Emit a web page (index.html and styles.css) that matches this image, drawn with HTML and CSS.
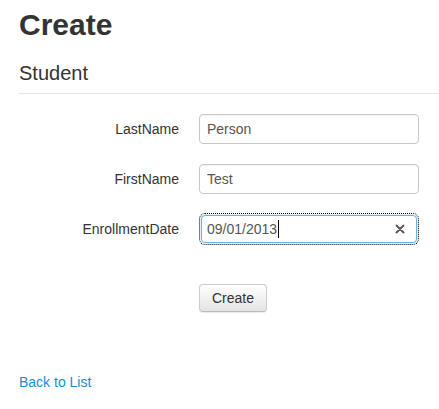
FILE: index.html
```html
<!DOCTYPE html>
<html>
<head>
<meta charset="utf-8">
<link rel="stylesheet" href="styles.css">
</head>
<body>
<div class="page">
  <h2 class="title">Create</h2>
  <h4 class="subtitle">Student</h4>
  <hr class="rule">
  <form class="form">
    <label class="label">LastName</label>
    <div class="field">Person</div>
    <label class="label">FirstName</label>
    <div class="field">Test</div>
    <label class="label">EnrollmentDate</label>
    <div class="field focused"><span class="value">09/01/2013</span><span class="caret"></span><svg class="clear" width="10" height="10" viewBox="0 0 10 10"><path d="M1.5 1.5 L8.5 8.5 M8.5 1.5 L1.5 8.5" stroke="#555" stroke-width="1.8" stroke-linecap="round"/></svg></div>
    <div class="actions"><button type="button" class="btn">Create</button></div>
  </form>
  <a class="back" href="#">Back to List</a>
</div>
</body>
</html>
```

FILE: styles.css
```css
html, body {
  margin: 0;
  padding: 0;
  background: #fff;
}
body {
  font-family: "Liberation Sans", Arial, sans-serif;
  font-size: 14px;
  line-height: 20px;
  color: #333;
}
.page {
  padding: 8px 0 0 19px;
  display: flex;
  flex-direction: column;
  align-items: flex-start;
}
.title {
  margin: 0;
  font-size: 30px;
  line-height: 33px;
  font-weight: bold;
  color: #333;
}
.subtitle {
  margin: 21px 0 0;
  font-size: 20px;
  line-height: 22px;
  font-weight: normal;
  color: #333;
}
.rule {
  align-self: stretch;
  margin: 9px 0 0;
  border: 0;
  border-top: 1px solid #e6e6e6;
  height: 0;
}
.form {
  margin-top: 20px;
  display: grid;
  grid-template-columns: 160px 220px;
  column-gap: 20px;
  row-gap: 20px;
  align-items: center;
}
.label {
  text-align: right;
  color: #333;
}
.field {
  box-sizing: border-box;
  height: 30px;
  border: 1px solid #c8c8c8;
  border-radius: 4px;
  padding: 0 7px;
  display: flex;
  align-items: center;
  color: #555;
  box-shadow: inset 0 1px 1px rgba(0,0,0,0.05);
}
.field.focused {
  height: 28px;
  margin: 1px 2px;
  border-color: #66afe9;
  outline: 1px dotted #000;
  outline-offset: 1px;
  padding: 0 6px 0 5px;
  box-shadow: 0 0 2px rgba(102,175,233,0.6);
}
.caret {
  display: inline-block;
  width: 1px;
  height: 18px;
  background: #000;
  margin-left: 1px;
}
.clear {
  margin-left: auto;
  margin-right: 5px;
}
.actions {
  grid-column: 2;
  display: flex;
  margin-top: 20px;
}
.btn {
  font-family: "Liberation Sans", Arial, sans-serif;
  font-size: 14px;
  line-height: 20px;
  color: #333;
  padding: 3px 12px;
  border: 1px solid #ccc;
  border-bottom-color: #bbb;
  border-radius: 4px;
  background: linear-gradient(#ffffff, #e4e4e4);
  box-shadow: 0 1px 1px rgba(0,0,0,0.08);
}
.back {
  margin-top: 60px;
  color: #178ed3;
  text-decoration: none;
}
```
